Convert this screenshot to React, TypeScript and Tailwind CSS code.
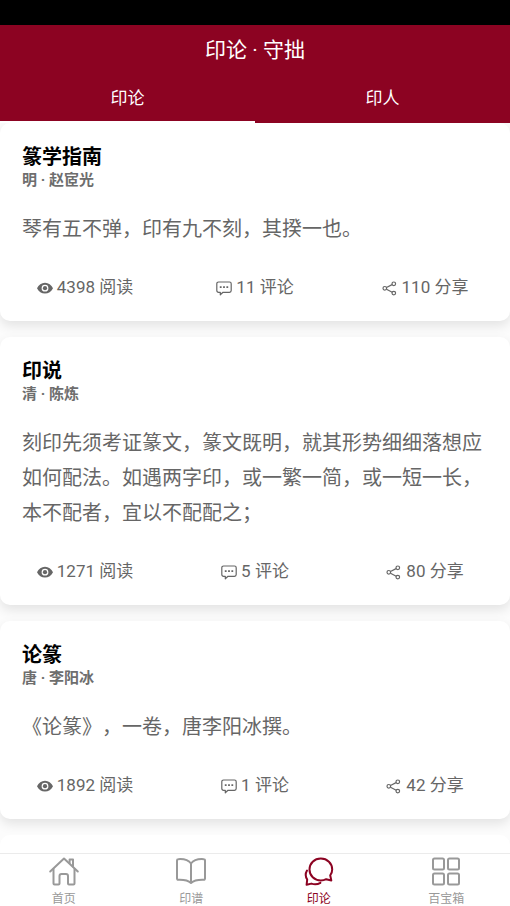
import { useState } from "react";

const articles = [
  {
    title: "篆学指南",
    author: "明 · 赵宧光",
    text: "琴有五不弹，印有九不刻，其揆一也。",
    reads: 4398,
    comments: 11,
    shares: 110,
  },
  {
    title: "印说",
    author: "清 · 陈炼",
    text: "刻印先须考证篆文，篆文既明，就其形势细细落想应如何配法。如遇两字印，或一繁一简，或一短一长，本不配者，宜以不配配之；",
    reads: 1271,
    comments: 5,
    shares: 80,
  },
  {
    title: "论篆",
    author: "唐 · 李阳冰",
    text: "《论篆》，一卷，唐李阳冰撰。",
    reads: 1892,
    comments: 1,
    shares: 42,
  },
];

function EyeIcon() {
  return (
    <svg viewBox="0 0 16 16" className="h-4 w-4" aria-hidden="true">
      <path
        fill="currentColor"
        fillRule="evenodd"
        d="M8 2.8C4.6 2.8 1.6 5 0 8.200C1.600 11.400 4.600 13.600 8 13.600S14.400 11.400 16 8.200C14.400 5 11.400 2.800 8 2.800ZM8 4.800a3.400 3.400 0 1 1 0 6.800a3.400 3.400 0 1 1 0-6.800Z"
      />
      <circle cx="8" cy="8.2" r="2.1" fill="currentColor" />
    </svg>
  );
}

function CommentIcon() {
  return (
    <svg viewBox="0 0 16 16" className="h-4 w-4" fill="none" aria-hidden="true">
      <path
        stroke="currentColor"
        strokeWidth="1.2"
        strokeLinejoin="round"
        d="M2.500 2h11a1.700 1.700 0 0 1 1.700 1.700v6.900a1.700 1.700 0 0 1-1.700 1.700H7l-2.700 2.500V12.300H2.500A1.700 1.700 0 0 1 .8 10.600V3.700A1.700 1.700 0 0 1 2.500 2Z"
      />
      <path fill="currentColor" d="M3.800 6.300h1.800v1.800H3.800zM7.100 6.300h1.800v1.800H7.100zM10.400 6.300h1.800v1.800h-1.800z" />
    </svg>
  );
}

function ShareIcon() {
  return (
    <svg viewBox="0 0 16 16" className="h-4 w-4" fill="none" stroke="currentColor" strokeWidth="1.2" aria-hidden="true">
      <circle cx="2.800" cy="8.300" r="1.800" />
      <circle cx="11.800" cy="3.800" r="1.800" />
      <circle cx="11.800" cy="13.100" r="1.800" />
      <path d="M4.500 7.500l5.600-2.900M4.500 9.200l5.700 3" />
    </svg>
  );
}

function HomeIcon() {
  return (
    <svg viewBox="0 0 32 32" className="h-8 w-8" fill="none" stroke="currentColor" strokeWidth="2" strokeLinejoin="round" strokeLinecap="round" aria-hidden="true">
      <path d="M2.200 16.500L16 3.500l13.800 13" />
      <path d="M5.500 14V28.500a1 1 0 0 0 1 1h4a1 1 0 0 0 1-1V21a2 2 0 0 1 2-2h4.500a2 2 0 0 1 2 2v7.500a1 1 0 0 0 1 1h4.500a1 1 0 0 0 1-1V14" />
      <path d="M21.600 8V4.600h3.400v7" />
    </svg>
  );
}

function BookIcon() {
  return (
    <svg viewBox="0 0 32 32" className="h-8 w-8" fill="none" stroke="currentColor" strokeWidth="2" strokeLinejoin="round" aria-hidden="true">
      <path d="M16 8.500C13.500 5.200 8.500 3.800 3.200 4.200a1.200 1.200 0 0 0-1.200 1.200V23.600a1.200 1.200 0 0 0 1.200 1.200C8.500 24.600 13 25.200 16 28C19 25.200 23.500 24.600 28.800 24.800A1.200 1.200 0 0 0 30 23.600V5.400a1.200 1.200 0 0 0-1.200-1.200C23.500 3.800 18.500 5.200 16 8.500Z" />
      <path d="M16 8.500V28" />
    </svg>
  );
}

function ChatIcon() {
  return (
    <svg viewBox="0 0 32 32" className="h-8 w-8" fill="none" stroke="currentColor" strokeWidth="2" strokeLinejoin="round" strokeLinecap="round" aria-hidden="true">
      <path d="M17.800 3.500C11.300 3.500 6.500 8.300 6.500 14.500S11.300 25.500 17.800 25.500C19.900 25.500 21.600 25.100 23.200 24.200L28.300 25.500L27.200 20.300C28.600 18.600 29.200 16.700 29.200 14.500C29.200 8.300 24.300 3.500 17.800 3.500Z" />
      <path d="M4 15.500C2.200 18.500 2.600 22 4.200 24.500L3.600 29.800L8.400 28.600C11.500 29.600 14.800 29.300 17.400 27.800" />
    </svg>
  );
}

function GridIcon() {
  return (
    <svg viewBox="0 0 32 32" className="h-8 w-8" fill="none" stroke="currentColor" strokeWidth="2" aria-hidden="true">
      <rect x="3" y="3.500" width="11" height="11" rx="1.500" />
      <rect x="18" y="3.500" width="11" height="11" rx="1.500" />
      <rect x="3" y="18.500" width="11" height="11" rx="1.500" />
      <rect x="18" y="18.500" width="11" height="11" rx="1.500" />
    </svg>
  );
}

const navItems = [
  { label: "首页", icon: HomeIcon },
  { label: "印谱", icon: BookIcon },
  { label: "印论", icon: ChatIcon },
  { label: "百宝箱", icon: GridIcon },
];

const tabs = ["印论", "印人"];

export default function App() {
  const [tab, setTab] = useState(0);
  const [page, setPage] = useState(2);

  return (
    <div
      lang="zh-CN"
      className="flex h-screen flex-col bg-[#fcfcfc] font-['Roboto','Noto_Sans_CJK_SC',sans-serif] [text-spacing-trim:space-all]"
    >
      {/* Status bar */}
      <div className="h-[25px] shrink-0 bg-black" />

      {/* Header */}
      <header className="shrink-0 bg-[#8c0322] text-white">
        <h1 className="py-2.5 text-center text-[21px] leading-[30px]">印论 · 守拙</h1>
        <div className="grid grid-cols-2" role="tablist">
          {tabs.map((label, idx) => (
            <button
              key={label}
              role="tab"
              aria-selected={tab === idx}
              onClick={() => setTab(idx)}
              className={`h-12 border-b-2 pt-0.5 text-[17px] ${
                tab === idx ? "border-white" : "border-transparent"
              }`}
            >
              {label}
            </button>
          ))}
        </div>
      </header>

      {/* Article list */}
      <main className="flex min-h-0 flex-1 flex-col gap-4 overflow-y-auto [scrollbar-width:none]">
        {articles.map((item) => (
          <article
            key={item.title}
            className="shrink-0 rounded-[10px] bg-white pt-[21px] pb-[11px] shadow-[0_5px_12px_rgba(0,0,0,0.10)]"
          >
            <div className="px-[22px]">
              <h2 className="text-[20px] leading-[26px] font-bold text-black">{item.title}</h2>
              <p className="text-[15px] leading-5 font-bold text-[#6e6e6e]">{item.author}</p>
              <p className="mt-[22px] text-[20px] leading-[35px] text-[#666]">{item.text}</p>
            </div>
            <div className="mt-[19px] grid h-11 grid-cols-3 text-[17px] text-[#666]">
              <span className="flex items-center justify-center gap-1">
                <EyeIcon />
                {item.reads} 阅读
              </span>
              <button className="flex items-center justify-center gap-1">
                <CommentIcon />
                {item.comments} 评论
              </button>
              <button className="flex items-center justify-center gap-1">
                <ShareIcon />
                {item.shares} 分享
              </button>
            </div>
          </article>
        ))}
        <article className="h-48 shrink-0 rounded-[10px] bg-white" />
      </main>

      {/* Bottom navigation */}
      <nav className="grid shrink-0 grid-cols-4 border-t border-[#ebebeb] bg-white pt-px">
        {navItems.map(({ label, icon: Icon }, idx) => (
          <a
            key={label}
            href="#"
            onClick={() => setPage(idx)}
            className={`flex flex-col items-center gap-[5px] text-[12px] leading-[14px] ${
              page === idx ? "text-[#8c0322]" : "text-[#999]"
            }`}
          >
            <Icon />
            {label}
          </a>
        ))}
      </nav>
    </div>
  );
}
